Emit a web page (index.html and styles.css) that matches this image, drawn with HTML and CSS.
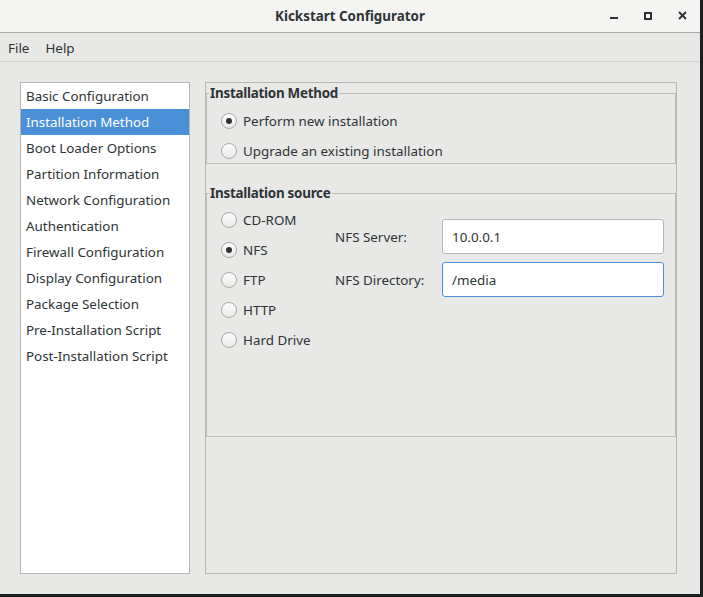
FILE: index.html
```html
<!DOCTYPE html>
<html lang="en">
<head>
<meta charset="utf-8">
<title>Kickstart Configurator</title>
<link rel="stylesheet" href="styles.css">
</head>
<body>
<div class="window">
  <header class="titlebar">
    <div class="title">Kickstart Configurator</div>
    <div class="controls">
      <span class="ctl" aria-label="Minimize">
        <svg width="16" height="16" viewBox="0 0 16 16"><rect x="4" y="9" width="8" height="2" fill="#2e3436"/></svg>
      </span>
      <span class="ctl" aria-label="Maximize">
        <svg width="16" height="16" viewBox="0 0 16 16"><rect x="5" y="5" width="6" height="6" fill="none" stroke="#2e3436" stroke-width="2"/></svg>
      </span>
      <span class="ctl" aria-label="Close">
        <svg width="16" height="16" viewBox="0 0 16 16"><path d="M5 4 L12 11 M12 4 L5 11" stroke="#2e3436" stroke-width="2" fill="none"/></svg>
      </span>
    </div>
  </header>
  <nav class="menubar">
    <span class="menu-item">File</span>
    <span class="menu-item">Help</span>
  </nav>
  <main class="content">
    <ul class="sidebar">
      <li class="item">Basic Configuration</li>
      <li class="item selected">Installation Method</li>
      <li class="item">Boot Loader Options</li>
      <li class="item">Partition Information</li>
      <li class="item">Network Configuration</li>
      <li class="item">Authentication</li>
      <li class="item">Firewall Configuration</li>
      <li class="item">Display Configuration</li>
      <li class="item">Package Selection</li>
      <li class="item">Pre-Installation Script</li>
      <li class="item">Post-Installation Script</li>
    </ul>
    <section class="panel">
      <fieldset class="frame frame-method">
        <legend>Installation Method</legend>
        <div class="radios">
          <div class="radio-row"><span class="radio checked"></span><span>Perform new installation</span></div>
          <div class="radio-row"><span class="radio"></span><span>Upgrade an existing installation</span></div>
        </div>
      </fieldset>
      <fieldset class="frame frame-source">
        <legend>Installation source</legend>
        <div class="source">
          <div class="radios source-radios">
            <div class="radio-row"><span class="radio"></span><span>CD-ROM</span></div>
            <div class="radio-row"><span class="radio checked"></span><span>NFS</span></div>
            <div class="radio-row"><span class="radio"></span><span>FTP</span></div>
            <div class="radio-row"><span class="radio"></span><span>HTTP</span></div>
            <div class="radio-row"><span class="radio"></span><span>Hard Drive</span></div>
          </div>
          <div class="nfs">
            <span class="nfs-label">NFS Server:</span>
            <input class="entry" type="text" value="10.0.0.1">
            <span class="nfs-label">NFS Directory:</span>
            <input class="entry focused" type="text" value="/media">
          </div>
        </div>
      </fieldset>
    </section>
  </main>
</div>
</body>
</html>
```
FILE: styles.css
```css
* { box-sizing: border-box; }
html { background: #1c1f20; }
body {
  margin: 0;
  font-family: "Noto Sans", "Open Sans", sans-serif;
  font-size: 13.4px;
  color: #2e3436;
}
.window {
  width: 700px;
  height: 594px;
  background: #e8e8e7;
  display: flex;
  flex-direction: column;
}
.titlebar {
  height: 33px;
  flex: none;
  background: #f4f4f3;
  border-bottom: 1px solid #a9a9a6;
  display: grid;
  grid-template-columns: 1fr auto 1fr;
  align-items: center;
}
.title {
  grid-column: 2;
  font-weight: bold;
}
.controls {
  grid-column: 3;
  justify-self: end;
  display: flex;
  height: 32px;
  padding-right: 1px;
}
.ctl {
  width: 34px;
  display: flex;
  align-items: center;
  justify-content: center;
}
.menubar {
  height: 29px;
  flex: none;
  border-bottom: 1px solid #d3d3d0;
  display: flex;
  align-items: center;
  padding-top: 1px;
}
.menu-item { padding: 0 8px; }
.content {
  flex: 1;
  display: flex;
  gap: 15px;
  padding: 20px 23px 20px 20px;
  min-height: 0;
}
.sidebar {
  width: 170px;
  flex: none;
  margin: 0;
  padding: 0;
  list-style: none;
  background: #fff;
  border: 1px solid #b6b6b3;
}
.item {
  height: 26px;
  line-height: 26px;
  padding-left: 5px;
  white-space: nowrap;
}
.item.selected {
  background: #4a90d9;
  color: #fff;
}
.panel {
  flex: 1;
  border: 1px solid #b6b6b3;
  padding-top: 1px;
}
.frame {
  margin: 0;
  padding: 0;
  border: 1px solid #bdbdba;
  min-width: 0;
}
.frame legend {
  margin-left: 2px;
  padding: 0 1px;
  line-height: 18px;
  font-weight: bold;
  letter-spacing: -0.25px;
}
.radios {
  display: flex;
  flex-direction: column;
  gap: 10px;
  padding-left: 14px;
}
.frame-method .radios { padding-top: 9px; padding-bottom: 2px; }
.frame-source { margin-top: 20px; }
.source {
  display: flex;
  padding-top: 8px;
  padding-bottom: 86px;
}
.source-radios { width: 128px; flex: none; }
.radio-row {
  height: 20px;
  display: flex;
  align-items: center;
  gap: 6px;
  white-space: nowrap;
}
.radio {
  width: 16px;
  height: 16px;
  flex: none;
  border-radius: 50%;
  border: 1px solid #a9a9a6;
  background: linear-gradient(#fdfdfd, #e9e9e8);
  display: flex;
  align-items: center;
  justify-content: center;
}
.radio.checked::after {
  content: "";
  width: 6px;
  height: 6px;
  border-radius: 50%;
  background: #2e3436;
}
.nfs {
  margin-top: 9px;
  display: grid;
  grid-template-columns: 107px 222px;
  grid-auto-rows: 35px;
  row-gap: 8px;
  align-items: center;
  align-self: flex-start;
}
.nfs-label { white-space: nowrap; }
.entry {
  width: 222px;
  height: 35px;
  margin: 0;
  padding: 0 9px;
  border: 1px solid #b6b6b3;
  border-radius: 3px;
  background: #fff;
  font: inherit;
  color: #2e3436;
  outline: none;
}
.entry.focused { border-color: #4a90d9; }
```
